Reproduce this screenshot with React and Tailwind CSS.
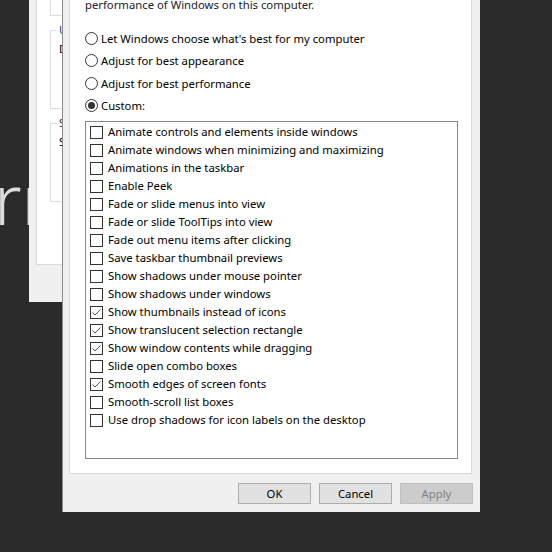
import React from "react";

const items = [
  ["Animate controls and elements inside windows", false],
  ["Animate windows when minimizing and maximizing", false],
  ["Animations in the taskbar", false],
  ["Enable Peek", false],
  ["Fade or slide menus into view", false],
  ["Fade or slide ToolTips into view", false],
  ["Fade out menu items after clicking", false],
  ["Save taskbar thumbnail previews", false],
  ["Show shadows under mouse pointer", false],
  ["Show shadows under windows", false],
  ["Show thumbnails instead of icons", true],
  ["Show translucent selection rectangle", true],
  ["Show window contents while dragging", true],
  ["Slide open combo boxes", false],
  ["Smooth edges of screen fonts", true],
  ["Smooth-scroll list boxes", false],
  ["Use drop shadows for icon labels on the desktop", false],
];

const radios = [
  ["Let Windows choose what's best for my computer", false],
  ["Adjust for best appearance", false],
  ["Adjust for best performance", false],
  ["Custom:", true],
];

function Radio({ on }) {
  return (
    <span className="w-[13px] h-[13px] rounded-full border border-[#333333] bg-white flex items-center justify-center shrink-0">
      {on && <span className="w-[7px] h-[7px] rounded-full bg-[#333333]" />}
    </span>
  );
}

function Check({ on }) {
  return (
    <span className="w-[13px] h-[13px] border border-[#333333] bg-white shrink-0 flex">
      {on && (
        <svg width="11" height="11" viewBox="0 0 11 11">
          <path d="M1.5 5.5 L4 8 L9.5 2.5" fill="none" stroke="#555555" strokeWidth="1" />
        </svg>
      )}
    </span>
  );
}

export default function App() {
  return (
    <div
      className="relative w-[552px] h-[552px] bg-[#2b2b2b] overflow-hidden text-[11.3px] text-black"
      style={{ fontFamily: '"Noto Sans", "Open Sans", sans-serif' }}
    >
      {/* desktop text */}
      <div className="absolute left-[-6px] top-[163px] text-[70px] font-light text-[#dcdcdc] leading-none whitespace-nowrap">
        rn
      </div>

      {/* background window */}
      <div className="absolute left-[29px] top-[-20px] w-[300px] h-[322px] bg-[#f0f0f0] pl-[7px]">
        <div className="w-[280px] h-[285px] bg-white border border-[#d9d9d9] pl-[13px] pt-[4px]">
          <div className="h-[31px] w-[200px] border-l border-b border-[#dcdcdc]" />
          <div className="relative mt-[14px] h-[79px] w-[200px] border border-[#dcdcdc]">
            <span className="absolute left-[6px] top-[-9px] bg-white px-[2px] text-[#3434a8] whitespace-nowrap">User Profiles</span>
            <span className="absolute left-[8px] top-[10px] whitespace-nowrap">Desktop settings related to your sign-in</span>
          </div>
          <div className="relative mt-[14px] h-[79px] w-[200px] border border-[#dcdcdc]">
            <span className="absolute left-[6px] top-[-9px] bg-white px-[2px] text-[#3d3520] whitespace-nowrap">Startup and Recovery</span>
            <span className="absolute left-[8px] top-[10px] whitespace-nowrap">System startup, system failure</span>
          </div>
        </div>
      </div>

      {/* main dialog */}
      <div className="absolute left-[62px] top-[-26px] w-[418px] h-[538px] bg-[#f0f0f0] border-l border-[#8a8a8a] flex flex-col">
        <div className="ml-[6px] w-[403px] h-[500px] bg-white border border-[#d9d9d9] pl-[15px] pt-[7px] flex flex-col">
          <div className="leading-[15px] text-[#1a1a2e]">
            <div className="whitespace-nowrap">Select the settings you want to use for the appearance and</div>
            <div className="whitespace-nowrap">performance of Windows on this computer.</div>
          </div>
          <div className="mt-[15px] flex flex-col">
            {radios.map(([t, on]) => (
              <div key={t} className="h-[22.5px] flex items-center gap-[3px]">
                <Radio on={on} />
                <span className="whitespace-nowrap leading-none">{t}</span>
              </div>
            ))}
          </div>
          <div className="mt-[4px] w-[373px] h-[338px] border border-[#828790] bg-white pt-[1px] pl-[4px] flex flex-col">
            {items.map(([t, on]) => (
              <div key={t} className="h-[18px] flex items-center gap-[5px] shrink-0">
                <Check on={on} />
                <span className="whitespace-nowrap leading-none">{t}</span>
              </div>
            ))}
          </div>
        </div>
        <div className="mt-[9px] flex justify-end gap-[8px] pr-[7px]">
          <button className="w-[73px] h-[21px] bg-[#e1e1e1] border border-[#adadad] leading-none">OK</button>
          <button className="w-[73px] h-[21px] bg-[#e1e1e1] border border-[#adadad] leading-none">Cancel</button>
          <button className="w-[73px] h-[21px] bg-[#cccccc] border border-[#bfbfbf] text-[#838383] leading-none">Apply</button>
        </div>
      </div>
    </div>
  );
}
